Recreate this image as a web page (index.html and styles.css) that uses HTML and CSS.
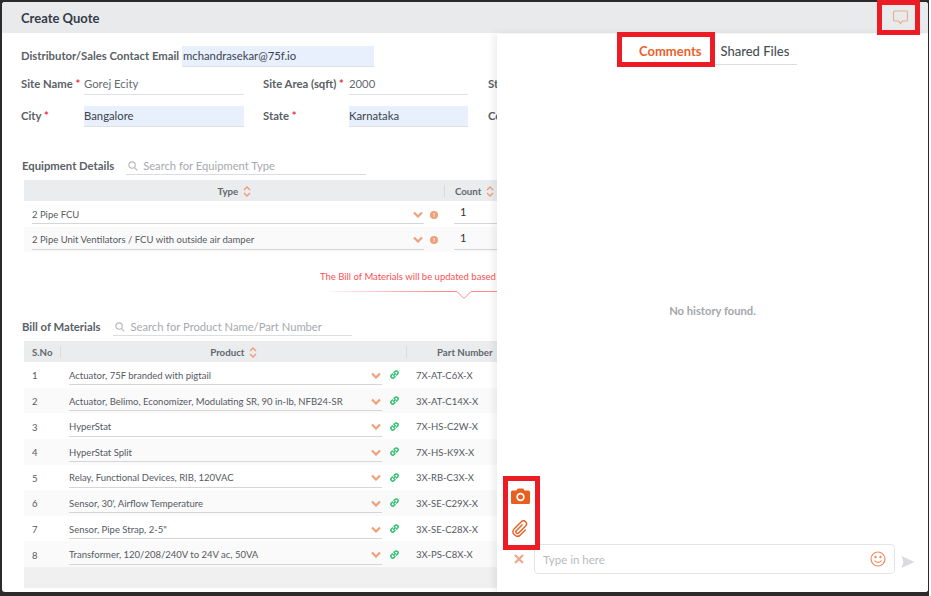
FILE: index.html
```html
<!DOCTYPE html>
<html lang="en">
<head>
    <meta charset="UTF-8">
    <meta name="viewport" content="width=device-width, initial-scale=1.0">
    <title>Create Quote</title>
    <link rel="stylesheet" href="styles.css">
</head>
<body>
    <div class="page">
        <div class="window">
            <div class="title-bar">
                <span class="title">Create Quote</span>
                <svg class="chat-icon" width="15" height="15" viewBox="0 0 15 15" fill="none" stroke="#eaa98a" stroke-width="1.2">
                    <path d="M2 1h11a1.500 1.500 0 0 1 1.500 1.500v7a1.500 1.500 0 0 1-1.500 1.500h-3.500l-2 2.500-2-2.500h-3.500a1.500 1.500 0 0 1-1.500-1.500v-7a1.500 1.500 0 0 1 1.500-1.500z"/>
                </svg>
            </div>

            <div class="content">
                <div class="email-row">
                    <span class="label email-label">Distributor/Sales Contact Email</span>
                    <span class="field autofill email-field">mchandrasekar@75f.io</span>
                </div>
                <div class="site-row">
                    <span class="label label-a">Site Name <i>*</i></span>
                    <span class="field field-a muted">Gorej Ecity</span>
                    <span class="label label-b">Site Area (sqft) <i>*</i></span>
                    <span class="field field-b muted">2000</span>
                    <span class="label">St</span>
                </div>
                <div class="site-row city-row">
                    <span class="label label-a">City <i>*</i></span>
                    <span class="field field-a autofill">Bangalore</span>
                    <span class="label label-b">State <i>*</i></span>
                    <span class="field field-b autofill">Karnataka</span>
                    <span class="label">Co</span>
                </div>

                <div class="section-head equipment-head">
                    <span class="section-title">Equipment Details</span>
                    <div class="search equipment-search">
                        <svg width="10" height="10" viewBox="0 0 11 11" fill="none" stroke="#b5b8bd" stroke-width="1.200"><circle cx="4.500" cy="4.500" r="3.500"/><path d="M7.200 7.200l3 3"/></svg>
                        <span>Search for Equipment Type</span>
                    </div>
                </div>
                <div class="grid-head equip-cols">
                    <div class="col-center">Type <svg class="sort" width="8" height="11" viewBox="0 0 8 11" fill="none" stroke="#ee9b75" stroke-width="1.300"><path d="M1 4l3-3 3 3M1 7l3 3 3-3"/></svg></div>
                    <div class="col-count">Count <svg class="sort" width="8" height="11" viewBox="0 0 8 11" fill="none" stroke="#ee9b75" stroke-width="1.300"><path d="M1 4l3-3 3 3M1 7l3 3 3-3"/></svg></div>
                </div>
                <div class="grid-row equip-cols">
                    <div class="pick-cell">
                        <div class="pick"><span>2 Pipe FCU</span><svg class="chevron" width="10" height="7" viewBox="0 0 10 7" fill="none" stroke="#f0a078" stroke-width="2.200"><path d="M1 1.500l4 4 4-4"/></svg></div>
                        <span class="info">!</span>
                    </div>
                    <div class="count-cell"><span>1</span></div>
                </div>
                <div class="grid-row equip-cols alt">
                    <div class="pick-cell">
                        <div class="pick"><span>2 Pipe Unit Ventilators / FCU with outside air damper</span><svg class="chevron" width="10" height="7" viewBox="0 0 10 7" fill="none" stroke="#f0a078" stroke-width="2.200"><path d="M1 1.500l4 4 4-4"/></svg></div>
                        <span class="info">!</span>
                    </div>
                    <div class="count-cell"><span>1</span></div>
                </div>

                <div class="bom-note">The Bill of Materials will be updated based on the equipment</div>
                <div class="note-line">
                    <svg width="600" height="10" viewBox="0 0 600 10" fill="none">
                        <defs><linearGradient id="fade" x1="0" x2="1" y1="0" y2="0"><stop offset="0" stop-color="#ff7a7e" stop-opacity="0"/><stop offset="0.2" stop-color="#ff8a8d"/><stop offset="1" stop-color="#ff8a8d"/></linearGradient></defs>
                        <path d="M0 1.500h135l7 7 7-7h451" stroke="url(#fade)"/>
                    </svg>
                </div>

                <div class="section-head bom-head">
                    <span class="section-title">Bill of Materials</span>
                    <div class="search bom-search">
                        <svg width="10" height="10" viewBox="0 0 11 11" fill="none" stroke="#b5b8bd" stroke-width="1.200"><circle cx="4.500" cy="4.500" r="3.500"/><path d="M7.200 7.200l3 3"/></svg>
                        <span>Search for Product Name/Part Number</span>
                    </div>
                </div>
                <div class="grid-head bom-cols">
                    <div class="col-sno">S.No</div>
                    <div class="col-center">Product <svg class="sort" width="8" height="11" viewBox="0 0 8 11" fill="none" stroke="#ee9b75" stroke-width="1.300"><path d="M1 4l3-3 3 3M1 7l3 3 3-3"/></svg></div>
                    <div class="col-part">Part Number</div>
                </div>
                <div id="bomRows"></div>
                <div class="grid-foot"></div>
            </div>

            <div class="side-panel">
                <div class="tabs">
                    <span class="tab active">Comments</span>
                    <span class="tab">Shared Files</span>
                </div>
                <div class="empty-note">No history found.</div>
                <div class="attach">
                    <svg width="19" height="16" viewBox="0 0 19 16"><path fill="#e8601f" fill-rule="evenodd" d="M1.500 2.500h4l1.200-2h5.600l1.200 2h4a1.500 1.500 0 0 1 1.500 1.500v10.500a1.500 1.500 0 0 1-1.500 1.500h-16a1.500 1.500 0 0 1-1.500-1.500v-10.500a1.500 1.500 0 0 1 1.500-1.500zM9.500 4.800a4.200 4.200 0 1 0 0 8.400 4.200 4.200 0 0 0 0-8.400zM9.500 6.500a2.500 2.500 0 1 1 0 5 2.500 2.500 0 0 1 0-5z"/></svg>
                    <svg width="16" height="17" viewBox="0 0 16 17" fill="none" stroke="#e8601f" stroke-width="1.400" stroke-linecap="round"><path d="M10 5l-5.700 5.700a1.600 1.600 0 0 0 2.300 2.300l7-7a3 3 0 0 0-4.300-4.300l-7.200 7.200a4.400 4.400 0 0 0 6.200 6.200l5-5"/></svg>
                </div>
                <div class="composer">
                    <svg width="10" height="10" viewBox="0 0 10 10" fill="none" stroke="#f0a88c" stroke-width="2.200"><path d="M1 1l8 8M9 1l-8 8"/></svg>
                    <div class="composer-box">
                        <span class="placeholder">Type in here</span>
                        <svg width="16" height="16" viewBox="0 0 16 16" fill="none" stroke="#ee8c5e" stroke-width="1.200"><circle cx="8" cy="8" r="7"/><circle cx="5.500" cy="6" r="0.600"/><circle cx="10.500" cy="6" r="0.600"/><path d="M4.500 9.500c1.500 2.500 5.500 2.500 7 0"/></svg>
                    </div>
                    <svg class="send" width="14" height="12" viewBox="0 0 13 12"><path fill="#d9dbde" d="M0 0l13 6-13 6 2-6z"/></svg>
                </div>
            </div>
        </div>

        <div class="mark mark-chat"></div>
        <div class="mark mark-tab"></div>
        <div class="mark mark-attach"></div>
    </div>
    <script>
        const products = [
            ['Actuator, 75F branded with pigtail', '7X-AT-C6X-X'],
            ['Actuator, Belimo, Economizer, Modulating SR, 90 in-lb, NFB24-SR', '3X-AT-C14X-X'],
            ['HyperStat', '7X-HS-C2W-X'],
            ['HyperStat Split', '7X-HS-K9X-X'],
            ['Relay, Functional Devices, RIB, 120VAC', '3X-RB-C3X-X'],
            ['Sensor, 30\', Airflow Temperature', '3X-SE-C29X-X'],
            ['Sensor, Pipe Strap, 2-5"', '3X-SE-C28X-X'],
            ['Transformer, 120/208/240V to 24V ac, 50VA', '3X-PS-C8X-X']
        ];

        const rows = document.getElementById('bomRows');
        products.forEach((product, i) => {
            const row = document.createElement('div');
            row.className = 'grid-row bom-cols' + (i % 2 ? ' alt' : '');
            row.innerHTML = `
                <div class="col-sno">${i + 1}</div>
                <div class="pick-cell">
                    <div class="pick"><span></span><svg class="chevron" width="10" height="7" viewBox="0 0 10 7" fill="none" stroke="#f0a078" stroke-width="2.200"><path d="M1 1.500l4 4 4-4"/></svg></div>
                    <svg class="link" width="9" height="9" viewBox="0 0 10 10" fill="none" stroke="#2fbf71" stroke-width="1.700"><path d="M4 3.200l1.600-1.600a1.600 1.600 0 0 1 2.800 2.800l-1.600 1.600M6 6.800l-1.600 1.600a1.600 1.600 0 0 1-2.800-2.800l1.600-1.600M3.700 6.300l2.600-2.600"/></svg>
                </div>
                <div class="col-part">${product[1]}</div>
            `;
            row.querySelector('.pick span').textContent = product[0];
            rows.appendChild(row);
        });
    </script>
</body>
</html>
```
FILE: styles.css
```css
body {
    margin: 0;
    background: white;
    font-family: Lato, "Open Sans", sans-serif;
    color: #4a4f57;
    overflow: hidden;
}
.page {
    position: relative;
    width: 929px;
    height: 596px;
    padding: 2px 0 0 2px;
    box-sizing: border-box;
    background: #2b2b2b;
}
.window {
    position: relative;
    width: 926px;
    height: 590px;
    background: white;
    border-radius: 3px;
    overflow: hidden;
}
.title-bar {
    display: flex;
    align-items: center;
    justify-content: space-between;
    height: 31px;
    padding: 0 19px;
    background: #e9eaec;
}
.title {
    font-size: 13px;
    font-weight: 700;
    color: #333c48;
}
.chat-icon {
    margin-right: 1px;
}
.content {
    padding: 13px 0 0 19px;
}
.label {
    padding-bottom: 2px;
    font-size: 11.3px;
    font-weight: 700;
    color: #5a5f66;
    white-space: nowrap;
}
.label i {
    color: #f0323c;
    font-style: normal;
}
.field {
    box-sizing: border-box;
    height: 21px;
    line-height: 20px;
    font-size: 11.3px;
    color: #3c424b;
    border-bottom: 1px solid #dfe0e2;
}
.muted {
    color: #666b72;
}
.autofill {
    background: #e8f0fe;
}
.email-row {
    display: flex;
    align-items: center;
    height: 21px;
}
.email-label {
    width: 161px;
}
.email-field {
    width: 192px;
    padding-left: 1px;
}
.site-row {
    display: flex;
    align-items: center;
    height: 21px;
    margin-top: 7px;
    white-space: nowrap;
}
.city-row {
    margin-top: 11px;
}
.label-a {
    width: 63px;
}
.field-a {
    width: 160px;
}
.label-b {
    width: 86px;
    margin-left: 19px;
}
.field-b {
    width: 119px;
    margin-right: 20px;
}
.section-head {
    display: flex;
    align-items: center;
    height: 18px;
}
.equipment-head {
    margin: 30px 0 0 1px;
}
.bom-head {
    margin: 18px 0 0 1px;
}
.section-title {
    padding-bottom: 2px;
    font-size: 11.3px;
    font-weight: 700;
    color: #5a5f66;
}
.search {
    display: flex;
    align-items: center;
    gap: 5px;
    box-sizing: border-box;
    height: 17px;
    padding-left: 2px;
    font-size: 11.2px;
    color: #a6a9ae;
    border-bottom: 1px solid #dcdde0;
}
.equipment-search {
    width: 240px;
    margin-left: 12px;
}
.bom-search {
    width: 239px;
    margin-left: 13px;
}
.grid-head,
.grid-row {
    display: grid;
    width: 900px;
    margin-left: 3px;
    align-items: center;
}
.grid-head {
    height: 21px;
    margin-top: 5px;
    background: #ebecee;
    font-size: 9.7px;
    font-weight: 700;
    color: #62666d;
}
.grid-row {
    height: 25.6px;
    font-size: 9.5px;
    color: #55595f;
}
.grid-row.alt {
    background: #fafafa;
}
.equip-cols {
    grid-template-columns: 421px 1fr;
}
.bom-cols {
    grid-template-columns: 37px 346px 1fr;
}
.col-center {
    text-align: center;
    border-right: 1px solid #d9dadc;
}
.col-count {
    padding-left: 10px;
}
.col-sno {
    padding-left: 8px;
}
.grid-row .col-sno {
    padding-top: 2px;
}
.grid-head .col-sno {
    border-right: 1px solid #d9dadc;
}
.col-part {
    padding-left: 9px;
}
.grid-row .col-part {
    padding-top: 1px;
}
.grid-head .col-part {
    padding-left: 30px;
}
.sort {
    margin-left: 2px;
    vertical-align: -2px;
}
.pick-cell {
    display: flex;
    align-items: center;
    gap: 6px;
    padding: 0 7px 0 8px;
}
.bom-cols .pick-cell {
    gap: 8px;
    padding-right: 8px;
}
.pick {
    display: flex;
    flex: 1;
    align-items: center;
    justify-content: space-between;
    box-sizing: border-box;
    height: 19px;
    padding-right: 1px;
    margin-top: 2px;
    border-bottom: 1px solid #d5d6d8;
    white-space: nowrap;
}
.info {
    display: block;
    width: 8px;
    height: 8px;
    margin-top: 2px;
    font-size: 6px;
    line-height: 8px;
    font-weight: 900;
    text-align: center;
    color: white;
    background: #f0a078;
    border-radius: 50%;
}
.count-cell {
    padding-left: 9px;
}
.count-cell span {
    display: block;
    box-sizing: border-box;
    width: 60px;
    height: 21px;
    padding: 2px 0 0 6px;
    font-size: 11px;
    color: #333;
    border-bottom: 1px solid #d5d6d8;
}
.bom-note {
    margin: 19px 0 0 299px;
    font-size: 9.5px;
    color: #ff4f55;
    white-space: nowrap;
}
.note-line {
    height: 10px;
    margin: 8px 0 0 301px;
}
.note-line svg {
    display: block;
}
.grid-foot {
    width: 900px;
    height: 21px;
    margin-left: 3px;
    background: #f0f0f1;
}
.side-panel {
    position: absolute;
    top: 32px;
    right: 0;
    bottom: 0;
    display: flex;
    flex-direction: column;
    width: 431px;
    background: white;
    box-shadow: -3px 0 8px rgba(0, 0, 0, 0.08);
}
.tabs {
    display: flex;
    align-items: center;
    gap: 19px;
    box-sizing: border-box;
    width: 161px;
    height: 31px;
    margin-left: 139px;
    padding: 3px 0 0 3px;
    border-bottom: 1px solid #dcdde0;
    font-size: 13px;
}
.tab {
    color: #4a4f57;
    font-weight: 500;
}
.tab.active {
    color: #e8622c;
    font-weight: 700;
}
.empty-note {
    margin-top: 239px;
    text-align: center;
    font-size: 11.2px;
    font-weight: 700;
    color: #a3a6ab;
}
.attach {
    display: flex;
    flex-direction: column;
    align-items: center;
    gap: 16px;
    width: 36px;
    margin: 171px 0 0 5px;
}
.composer {
    display: flex;
    align-items: center;
    gap: 10px;
    margin: 7px 0 0 17px;
}
.composer-box {
    display: flex;
    align-items: center;
    justify-content: space-between;
    box-sizing: border-box;
    width: 361px;
    height: 30px;
    padding: 0 8px;
    background: white;
    border: 1px solid #e3e4e6;
    border-radius: 4px;
}
.send {
    margin: 5px 0 0 -4px;
}
.placeholder {
    font-size: 11.5px;
    color: #b7bac0;
}
.mark {
    position: absolute;
    box-sizing: border-box;
    border: 5px solid #ed1c24;
}
.mark-chat {
    top: 0;
    left: 877px;
    width: 43px;
    height: 35px;
}
.mark-tab {
    top: 32px;
    left: 617px;
    width: 98px;
    height: 35px;
}
.mark-attach {
    top: 476px;
    left: 503px;
    width: 37px;
    height: 74px;
}
```
